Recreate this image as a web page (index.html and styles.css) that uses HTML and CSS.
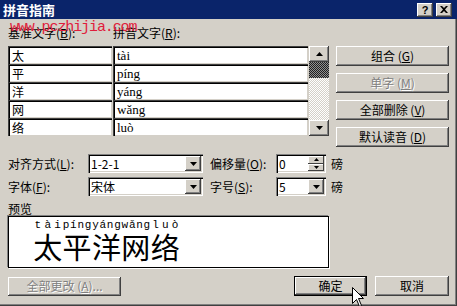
FILE: index.html
```html
<!DOCTYPE html>
<html lang="zh-CN">
<head>
<meta charset="UTF-8">
<title>拼音指南</title>
<link rel="stylesheet" href="styles.css">
</head>
<body>

<div class="dialog">
  <div class="titlebar">
    <span class="title">拼音指南</span>
    <div class="caption-buttons">
      <span class="cap-btn help">?</span>
      <span class="cap-btn">
        <svg width="8" height="7" viewBox="0 0 8 7"><path d="M0 0h2l2 2 2-2h2L5 3.5 8 7H6L4 5 2 7H0l3-3.5z" fill="#000"/></svg>
      </span>
    </div>
  </div>

  <div class="watermark">www.pczhijia.com</div>

  <div class="content">
    <div class="top">
      <div class="col-labels">
        <span class="lbl-base">基准文字(<u>B</u>):</span>
        <span>拼音文字(<u>R</u>):</span>
      </div>

      <div class="word-table">
        <div class="cell">太</div><div class="cell pinyin">tài</div>
        <div class="cell">平</div><div class="cell pinyin">píng</div>
        <div class="cell">洋</div><div class="cell pinyin">yáng</div>
        <div class="cell">网</div><div class="cell pinyin">wǎng</div>
        <div class="cell">络</div><div class="cell pinyin">luò</div>
        <div class="scrollbar">
          <div class="sb-btn"><svg width="7" height="4" viewBox="0 0 7 4"><path d="M3.5 0L7 4H0z"/></svg></div>
          <div class="sb-thumb"></div>
          <div class="sb-track"></div>
          <div class="sb-btn"><svg width="7" height="4" viewBox="0 0 7 4"><path d="M0 0h7L3.5 4z"/></svg></div>
        </div>
      </div>

      <div class="side-buttons">
        <div class="btn">组合 (<u>G</u>)</div>
        <div class="btn disabled">单字 (<u>M</u>)</div>
        <div class="btn">全部删除 (<u>V</u>)</div>
        <div class="btn">默认读音 (<u>D</u>)</div>
      </div>
    </div>

    <div class="options">
      <span class="opt-label">对齐方式(<u>L</u>):</span>
      <div class="field">
        <span class="field-text">1-2-1</span>
        <span class="drop-btn"><svg width="7" height="4" viewBox="0 0 7 4"><path d="M0 0h7L3.5 4z"/></svg></span>
      </div>
      <span class="opt-label second">偏移量(<u>O</u>):</span>
      <div class="field">
        <span class="field-text">0</span>
        <span class="spin">
          <span class="spin-btn"><svg width="5" height="3" viewBox="0 0 5 3"><path d="M2.5 0L5 3H0z"/></svg></span>
          <span class="spin-btn"><svg width="5" height="3" viewBox="0 0 5 3"><path d="M0 0h5L2.5 3z"/></svg></span>
        </span>
      </div>
      <span class="unit">磅</span>

      <span class="opt-label">字体(<u>F</u>):</span>
      <div class="field">
        <span class="field-text">宋体</span>
        <span class="drop-btn"><svg width="7" height="4" viewBox="0 0 7 4"><path d="M0 0h7L3.5 4z"/></svg></span>
      </div>
      <span class="opt-label second">字号(<u>S</u>):</span>
      <div class="field">
        <span class="field-text">5</span>
        <span class="drop-btn"><svg width="7" height="4" viewBox="0 0 7 4"><path d="M0 0h7L3.5 4z"/></svg></span>
      </div>
      <span class="unit">磅</span>
    </div>

    <div class="preview-label">预览</div>
    <div class="preview">
      <div class="ruby-line" id="rubyLine"></div>
    </div>

    <div class="footer">
      <div class="btn disabled wide">全部更改 (<u>A</u>)...</div>
      <div class="btn default">确定</div>
      <div class="btn cancel">取消</div>
    </div>
  </div>

  <svg class="cursor" width="13" height="20" viewBox="0 0 13 20">
    <path d="M0.5 0.5V16.5L4.5 12.5L7.5 19.5L9.5 18.5L6.5 11.5H11.5Z" fill="#fff" stroke="#000" stroke-width="1"/>
  </svg>
</div>

<script>
const words = [
  { han: "太", py: "tài" },
  { han: "平", py: "píng" },
  { han: "洋", py: "yáng" },
  { han: "网", py: "wǎng" },
  { han: "络", py: "luò" }
];

const line = document.getElementById('rubyLine');
words.forEach(w => {
  const col = document.createElement('div');
  col.className = 'ruby';
  const letters = w.py.split('').map(ch => `<span>${ch}</span>`).join('');
  col.innerHTML = `<div class="ruby-top">${letters}</div><div class="ruby-base">${w.han}</div>`;
  line.appendChild(col);
});
</script>
</body>
</html>
```

FILE: styles.css
```css
* {
  margin: 0;
  padding: 0;
  box-sizing: border-box;
}

body {
  background: #d4d0c8;
  font-family: "Noto Sans CJK SC", sans-serif;
  font-size: 12px;
  color: #000;
}

u {
  text-decoration: underline;
  text-underline-offset: 1px;
}

.dialog {
  position: relative;
  width: 457px;
  height: 306px;
  overflow: hidden;
  background: #d4d0c8;
  box-shadow: inset -1px -1px #404040, inset -2px -2px #808080;
}

/* title bar */
.titlebar {
  height: 19px;
  background: #0a246a;
  color: #fff;
  display: flex;
  align-items: center;
  padding: 0 5px 0 3px;
}

.title {
  font-size: 13px;
  font-weight: bold;
  line-height: 19px;
}

.caption-buttons {
  margin-left: auto;
  display: flex;
  gap: 3px;
}

.cap-btn {
  width: 16px;
  height: 14px;
  background: #d4d0c8;
  color: #000;
  display: flex;
  align-items: center;
  justify-content: center;
  box-shadow: inset -1px -1px #404040, inset 1px 1px #fff, inset -2px -2px #808080;
}

.cap-btn.help {
  font-family: "Liberation Sans", sans-serif;
  font-weight: bold;
  font-size: 11px;
  line-height: 14px;
}

.watermark {
  position: absolute;
  left: 10px;
  top: 20px;
  font-family: "Liberation Mono", monospace;
  font-size: 15px;
  letter-spacing: -1.1px;
  color: #e01c3c;
  line-height: 16px;
}

.content {
  padding: 0 8px;
}

/* word table + buttons */
.top {
  display: grid;
  grid-template-columns: 321px 113px;
  grid-template-rows: 27px auto;
  column-gap: 7px;
}

.col-labels {
  grid-column: 1;
  padding-top: 7px;
  line-height: 14px;
  display: flex;
}

.lbl-base {
  width: 105px;
}

.word-table {
  grid-column: 1;
  grid-row: 2;
  display: grid;
  grid-template-columns: 104px 195px 20px;
  grid-template-rows: repeat(5, 18px);
  column-gap: 1px;
}

.cell {
  background: #fff;
  padding-left: 4px;
  line-height: 19px;
  box-shadow: inset 1px 1px #404040, inset 2px 2px #000, inset -1px -1px #d4d0c8;
}

.cell.pinyin {
  font-family: "Liberation Serif", serif;
  font-size: 13px;
}

.scrollbar {
  grid-column: 3;
  grid-row: 1 / span 5;
  display: flex;
  flex-direction: column;
}

.sb-btn {
  height: 16px;
  background: #d4d0c8;
  display: flex;
  align-items: center;
  justify-content: center;
  box-shadow: inset -1px -1px #404040, inset 1px 1px #fff, inset -2px -2px #808080;
}

.sb-thumb {
  height: 16px;
  background: repeating-conic-gradient(#202020 0 25%, #909090 0 50%) 0 0 / 2px 2px;
}

.sb-track {
  flex: 1;
  background: repeating-conic-gradient(#fff 0 25%, #d4d0c8 0 50%) 0 0 / 2px 2px;
}

.side-buttons {
  grid-column: 2;
  grid-row: 2;
  display: flex;
  flex-direction: column;
  gap: 7px;
}

.btn {
  height: 20px;
  background: #d4d0c8;
  display: flex;
  align-items: center;
  justify-content: center;
  line-height: 20px;
  white-space: pre;
  box-shadow: inset -1px -1px #404040, inset 1px 1px #fff, inset -2px -2px #808080;
}

.btn.disabled {
  color: #808080;
  text-shadow: 1px 1px #fff;
}

/* options */
.options {
  margin-top: 7px;
  display: grid;
  grid-template-columns: 80px 115px 73px 50px auto;
  grid-template-rows: 19px 19px;
  row-gap: 4px;
  align-items: center;
}

.opt-label.second {
  padding-left: 7px;
}

.unit {
  padding-left: 5px;
}

.field {
  height: 19px;
  background: #fff;
  display: flex;
  align-items: stretch;
  padding: 2px;
  box-shadow: inset 1px 1px #808080, inset 2px 2px #000, inset -1px -1px #fff, inset -2px -2px #d4d0c8;
}

.field-text {
  flex: 1;
  padding-left: 1px;
  line-height: 15px;
}

.drop-btn {
  width: 16px;
  background: #d4d0c8;
  display: flex;
  align-items: center;
  justify-content: center;
  box-shadow: inset -1px -1px #404040, inset 1px 1px #fff, inset -2px -2px #808080;
}

.spin {
  width: 16px;
  display: flex;
  flex-direction: column;
}

.spin-btn {
  flex: 1;
  background: #d4d0c8;
  display: flex;
  align-items: center;
  justify-content: center;
  box-shadow: inset -1px -1px #404040, inset 1px 1px #fff;
}

/* preview */
.preview-label {
  margin-top: 6px;
  line-height: 14px;
  height: 14px;
}

.preview {
  width: 321px;
  height: 52px;
  background: #fff;
  border: 1px solid #000;
  box-shadow: -1px -1px #808080, 1px 1px #fff;
  padding: 3px 0 0 24px;
}

.ruby-line {
  display: flex;
}

.ruby {
  width: 29.4px;
  display: flex;
  flex-direction: column;
}

.ruby-top {
  display: flex;
  justify-content: space-around;
  font-family: "Liberation Mono", monospace;
  font-size: 11px;
  line-height: 11px;
  height: 11px;
}

.ruby-base {
  font-size: 29px;
  line-height: 30px;
  text-align: center;
}

/* footer */
.footer {
  margin-top: 8px;
  display: flex;
  align-items: center;
}

.btn.wide {
  width: 113px;
  height: 19px;
}

.btn.default {
  width: 73px;
  margin-left: auto;
  box-shadow: inset 0 0 0 1px #000, inset -2px -2px #404040, inset 2px 2px #fff, inset -3px -3px #808080;
}

.btn.cancel {
  width: 74px;
  margin-left: 8px;
}

.cursor {
  position: absolute;
  left: 352px;
  top: 287px;
}
```
